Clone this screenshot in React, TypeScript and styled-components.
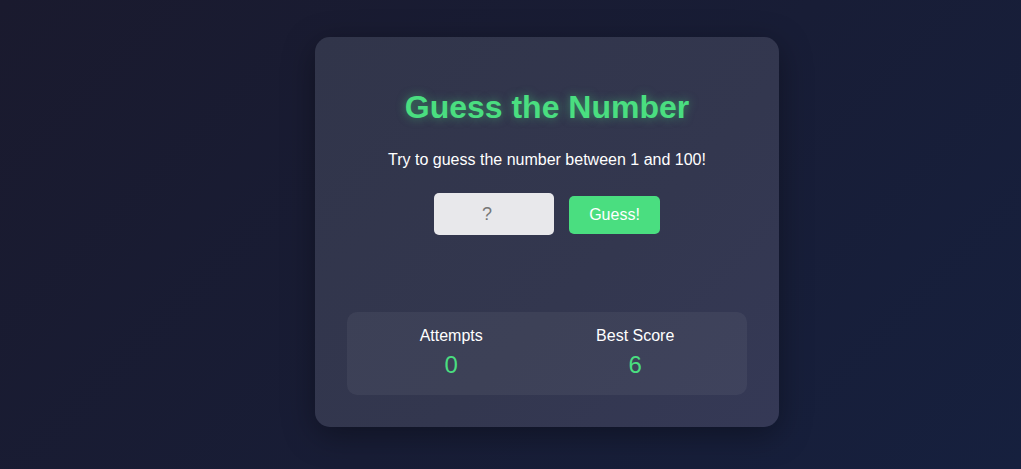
import React, {useState} from 'react';
import styled, {createGlobalStyle} from 'styled-components';

const GlobalStyle = createGlobalStyle`
  html, body {
    margin: 0;
    padding: 0;
    height: 100%;
  }
  body {
    font-family: "Liberation Sans", Arial, sans-serif;
    background: linear-gradient(135deg, #1a1a2e 0%, #181d36 55%, #16203e 100%);
    color: #ffffff;
    overflow: hidden;
  }
`;

export default function App() {
  const [guess, setGuess] = useState('');
  const attempts = 0;
  const best = 6;

  return (
    <>
      <GlobalStyle/>
      <Page>
        <Card>
          <Title>Guess the Number</Title>
          <Subtitle>Try to guess the number between 1 and 100!</Subtitle>
          <GuessRow>
            <GuessInput
              type="number"
              value={guess}
              placeholder="?"
              onChange={e => setGuess(e.target.value)}
            />
            <GuessButton>Guess!</GuessButton>
          </GuessRow>
          <Message/>
          <Stats>
            <Stat label="Attempts" value={attempts}/>
            <Stat label="Best Score" value={best}/>
          </Stats>
        </Card>
      </Page>
    </>
  );
}

interface StatProp {
  label: string;
  value: number;
}

function Stat({label, value}: StatProp) {
  return (
    <StatItem>
      <StatLabel>{label}</StatLabel>
      <StatValue>{value}</StatValue>
    </StatItem>
  );
}

const Page = styled.div`
  display: flex;
  justify-content: center;
  align-items: flex-start;
  height: 469px;
  box-sizing: border-box;
  padding: 37px 0 0 73px;
`;

const Card = styled.div`
  width: 464px;
  box-sizing: border-box;
  padding: 32px;
  border-radius: 15px;
  background: linear-gradient(135deg, #31354a 0%, #33374f 60%, #353956 100%);
  box-shadow: 0 8px 32px rgba(0, 0, 0, 0.35);
  text-align: center;
`;

const Title = styled.h1`
  margin: 20px 0 0;
  font-size: 32px;
  line-height: 37px;
  font-weight: bold;
  color: #4ade80;
  text-shadow: 0 0 10px rgba(74, 222, 128, 0.5);
`;

const Subtitle = styled.p`
  margin: 25px 0 0;
  font-size: 16px;
  line-height: 18px;
  color: #ffffff;
`;

const GuessRow = styled.div`
  display: flex;
  justify-content: center;
  align-items: center;
  gap: 15px;
  margin-top: 24px;
`;

const GuessInput = styled.input`
  width: 120px;
  height: 42px;
  box-sizing: border-box;
  padding: 0 14px 0 0;
  border: none;
  border-radius: 5px;
  background: #e8e8eb;
  font-family: "Liberation Sans", Arial, sans-serif;
  font-size: 18px;
  text-align: center;
  color: #333;
  outline: none;
  -moz-appearance: textfield;

  &::placeholder {
    color: #777;
  }
  &::-webkit-outer-spin-button,
  &::-webkit-inner-spin-button {
    -webkit-appearance: none;
    margin: 0;
  }
`;

const GuessButton = styled.button`
  width: 91px;
  height: 38px;
  margin-top: 2px;
  border: none;
  border-radius: 5px;
  background: #4ade80;
  color: #ffffff;
  font-family: "Liberation Sans", Arial, sans-serif;
  font-size: 16px;
  cursor: pointer;
`;

const Message = styled.div`
  min-height: 77px;
`;

const Stats = styled.div`
  display: flex;
  justify-content: space-around;
  padding: 15px 16px;
  border-radius: 10px;
  background: rgba(255, 255, 255, 0.05);
`;

const StatItem = styled.div`
  display: flex;
  flex-direction: column;
  align-items: center;
  gap: 5px;
`;

const StatLabel = styled.span`
  font-size: 16px;
  line-height: 18px;
  color: #ffffff;
`;

const StatValue = styled.span`
  font-size: 24px;
  line-height: 30px;
  color: #4ade80;
`;
